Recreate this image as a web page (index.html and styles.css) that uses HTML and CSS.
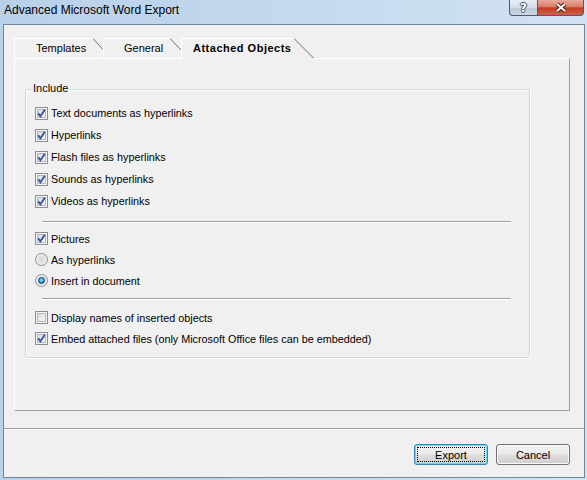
FILE: index.html
```html
<!DOCTYPE html>
<html>
<head>
<meta charset="utf-8">
<title>Advanced Microsoft Word Export</title>
<link rel="stylesheet" href="styles.css">
</head>
<body>
<div class="window">
  <div class="titlebar">
    <span class="title">Advanced Microsoft Word Export</span>
    <div class="caption-buttons">
      <span class="cap-btn cap-help">?</span>
      <span class="cap-btn cap-close">
        <svg class="cap-x" width="16" height="11" viewBox="0 0 16 11">
          <path class="x-outline" d="M4 2 L12 9 M12 2 L4 9"/>
          <path class="x-fill" d="M4 2 L12 9 M12 2 L4 9"/>
        </svg>
      </span>
    </div>
  </div>
  <div class="client">
    <div class="tabs-area">
      <div class="tabstrip">
        <div class="tab tab-templates">
          <span class="tab-label">Templates</span>
          <svg class="tab-slash" width="10" height="20" viewBox="0 0 10 20"><path d="M0 0.5 L10 11.5"/></svg>
        </div>
        <div class="tab tab-general">
          <span class="tab-label">General</span>
          <svg class="tab-slash" width="11" height="20" viewBox="0 0 11 20"><path d="M0 0.5 L11 12"/></svg>
        </div>
        <div class="tab tab-attached">
          <span class="tab-label">Attached Objects</span>
          <svg class="tab-slash" width="20" height="21" viewBox="0 0 20 21"><polygon class="slash-fill" points="0,0 20,20 20,21 0,21"/><path d="M0 0.5 L19.5 20"/></svg>
        </div>
      </div>
      <div class="panel">
        <div class="group">
          <div class="group-label">Include</div>
          <div class="group-body">
            <div class="rows rows-main">
              <div class="row"><span class="cb"><svg class="check" width="11" height="11" viewBox="0 0 11 11"><path d="M2.2 5.2 L4.4 8.4 L8.8 1.8"/></svg></span><span>Text documents as hyperlinks</span></div>
              <div class="row"><span class="cb"><svg class="check" width="11" height="11" viewBox="0 0 11 11"><path d="M2.2 5.2 L4.4 8.4 L8.8 1.8"/></svg></span><span>Hyperlinks</span></div>
              <div class="row"><span class="cb"><svg class="check" width="11" height="11" viewBox="0 0 11 11"><path d="M2.2 5.2 L4.4 8.4 L8.8 1.8"/></svg></span><span>Flash files as hyperlinks</span></div>
              <div class="row"><span class="cb"><svg class="check" width="11" height="11" viewBox="0 0 11 11"><path d="M2.2 5.2 L4.4 8.4 L8.8 1.8"/></svg></span><span>Sounds as hyperlinks</span></div>
              <div class="row"><span class="cb"><svg class="check" width="11" height="11" viewBox="0 0 11 11"><path d="M2.2 5.2 L4.4 8.4 L8.8 1.8"/></svg></span><span>Videos as hyperlinks</span></div>
            </div>
            <div class="sep sep-a"></div>
            <div class="rows">
              <div class="row"><span class="cb"><svg class="check" width="11" height="11" viewBox="0 0 11 11"><path d="M2.2 5.2 L4.4 8.4 L8.8 1.8"/></svg></span><span>Pictures</span></div>
              <div class="row"><span class="rb"></span><span>As hyperlinks</span></div>
              <div class="row"><span class="rb"><span class="rb-dot"></span></span><span>Insert in document</span></div>
            </div>
            <div class="sep sep-b"></div>
            <div class="rows">
              <div class="row"><span class="cb"></span><span>Display names of inserted objects</span></div>
              <div class="row"><span class="cb"><svg class="check" width="11" height="11" viewBox="0 0 11 11"><path d="M2.2 5.2 L4.4 8.4 L8.8 1.8"/></svg></span><span>Embed attached files (only Microsoft Office files can be embedded)</span></div>
            </div>
          </div>
        </div>
      </div>
    </div>
    <div class="footer-sep"></div>
    <div class="footer">
      <button class="btn btn-default">Export</button>
      <button class="btn">Cancel</button>
    </div>
  </div>
</div>
</body>
</html>
```

FILE: styles.css
```css
* { box-sizing: border-box; }

html, body {
  margin: 0;
  padding: 0;
}

body {
  width: 587px;
  height: 480px;
  overflow: hidden;
  font-family: "Liberation Sans", Arial, sans-serif;
  font-size: 11px;
  color: #000;
}

.window {
  width: 587px;
  height: 480px;
  display: flex;
  flex-direction: column;
  padding: 0 2px 2px 3px;
  background: linear-gradient(to right, #b8d0e9 0%, #c3d8ee 45%, #d2e2f3 100%);
}

.titlebar {
  height: 24px;
  flex: none;
  display: flex;
  justify-content: space-between;
  align-items: flex-start;
}

.title {
  padding-left: 1px;
  font-size: 12px;
  line-height: 20px;
  color: #000;
}

.caption-buttons {
  display: flex;
  margin-right: 1px;
}

.cap-btn {
  height: 16px;
  display: flex;
  align-items: center;
  justify-content: center;
  border: 1px solid #4a5c70;
  border-top: none;
}

.cap-help {
  width: 28px;
  border-right: none;
  border-bottom-left-radius: 4px;
  background: linear-gradient(#e8eef5 0%, #d3dde9 50%, #bccbdb 52%, #c9d6e4 100%);
  color: #fff;
  font-family: "DejaVu Sans", sans-serif;
  font-weight: bold;
  font-size: 12px;
  line-height: 14px;
  text-shadow: 1px 0 0 #3d4f64, -1px 0 0 #3d4f64, 0 1px 0 #3d4f64, 0 -1px 0 #3d4f64;
}

.cap-close {
  width: 47px;
  border-bottom-right-radius: 4px;
  background: linear-gradient(#eaa99a 0%, #d97c67 46%, #c23a20 52%, #d0644b 100%);
}

.cap-x { display: block; }

.x-outline {
  stroke: #4b1a10;
  stroke-width: 4;
  fill: none;
}

.x-fill {
  stroke: #fff;
  stroke-width: 2;
  fill: none;
}

.client {
  flex: 1;
  display: flex;
  flex-direction: column;
  border: 1px solid #72869b;
  background: #f0f0f0;
}

.tabs-area {
  padding: 13px 14px 0 10px;
}

.tabstrip {
  display: flex;
  height: 20px;
  align-items: flex-end;
}

.tab {
  display: flex;
  flex: none;
  height: 20px;
  border-left: 1px solid #fff;
}

.tab-label {
  display: block;
  border-top: 1px solid #fff;
  line-height: 19px;
  white-space: nowrap;
  background: #f0f0f0;
}

.tab-slash {
  display: block;
  flex: none;
}

.tab-slash path {
  stroke: #707070;
  stroke-width: 1;
  fill: none;
}

.slash-fill { fill: #f0f0f0; }

.tab-templates .tab-label {
  width: 78px;
  padding-left: 21px;
}

.tab-general .tab-label {
  width: 66px;
  padding-left: 20px;
}

.tab-attached {
  height: 21px;
  margin-bottom: -1px;
  position: relative;
  z-index: 1;
}

.tab-attached .tab-label {
  width: 112px;
  padding-left: 11px;
  font-weight: bold;
  letter-spacing: 0.5px;
}

.panel {
  width: 556px;
  height: 353px;
  border: 1px solid;
  border-color: #fff #a0a0a0 #a0a0a0 #fff;
  padding: 30px 0 0 10px;
}

.group {
  width: 505px;
  border: 1px solid #d0d8de;
  border-radius: 3px;
  box-shadow: inset 1px 1px 0 #fff, 1px 1px 0 #fff;
}

.group-label {
  width: max-content;
  margin: -8px 0 0 5px;
  padding: 0 2px;
  line-height: 13px;
  background: #f0f0f0;
}

.group-body {
  padding: 7px 18px 8px 9px;
  font-size: 10.8px;
}

.row {
  display: flex;
  align-items: center;
  gap: 3px;
  height: 21px;
  white-space: nowrap;
}

.rows-main .row { height: 22px; }

.sep {
  height: 2px;
  border-top: 1px solid #a0a0a0;
  border-bottom: 1px solid #fff;
}

.sep-a { margin: 9px 0 5px 7px; }
.sep-b { margin: 7px 0 7px 7px; }

.cb {
  display: block;
  flex: none;
  width: 13px;
  height: 13px;
  border: 1px solid #8e8f8f;
  background: linear-gradient(135deg, #cdd1d6 0%, #eceef0 55%, #fafafa 100%);
  box-shadow: inset 0 0 0 1px #f4f4f4, inset 0 0 0 2px #b3b8be;
}

.check {
  display: block;
}

.check path {
  stroke: #3a56a0;
  stroke-width: 1.9;
  fill: none;
}

.rb {
  display: flex;
  flex: none;
  align-items: center;
  justify-content: center;
  width: 13px;
  height: 13px;
  border-radius: 50%;
  border: 1px solid #8e8f8f;
  background: radial-gradient(circle at 50% 50%, #cfd3d8 0%, #e6e8ea 55%, #f8f8f8 100%);
}

.rb-dot {
  display: block;
  width: 7px;
  height: 7px;
  border-radius: 50%;
  border: 1px solid #1b3d66;
  background: radial-gradient(circle at 45% 40%, #b4f1ff 0%, #34a6e6 45%, #0d4f93 100%);
}

.footer-sep {
  margin-top: 17px;
  height: 2px;
  border-top: 1px solid #a0a0a0;
  border-bottom: 1px solid #fff;
}

.footer {
  display: flex;
  justify-content: flex-end;
  gap: 8px;
  padding: 14px 14px 0 0;
}

.btn {
  width: 74px;
  height: 21px;
  padding: 0;
  font-family: "Liberation Sans", Arial, sans-serif;
  font-size: 11px;
  color: #000;
  border: 1px solid #707070;
  border-radius: 3px;
  background: linear-gradient(#f2f2f2 0%, #ebebeb 48%, #dddddd 52%, #cfcfcf 100%);
  box-shadow: inset 0 0 0 1px #fbfbfb;
}

.btn-default {
  border-color: #3c7fb1;
  box-shadow: inset 0 0 0 1px #6fd3f7;
  outline: 1px dotted #000;
  outline-offset: -4px;
}
```
